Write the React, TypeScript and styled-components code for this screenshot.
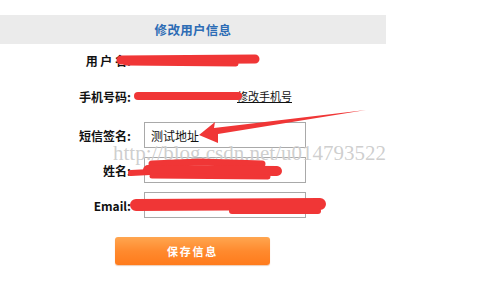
import React from 'react'
import styled, { createGlobalStyle } from 'styled-components'

const GlobalStyle = createGlobalStyle`
  html, body {
    margin: 0;
    padding: 0;
    background: #ffffff;
  }
  body {
    font-family: 'Noto Sans CJK SC', 'Liberation Sans', sans-serif;
  }
`

const Page = styled.div`
  position: relative;
  width: 480px;
  height: 300px;
  overflow: hidden;
  background: #ffffff;
`

const Header = styled.div`
  margin-top: 15px;
  width: 386px;
  height: 29px;
  background: #ebebeb;
  display: flex;
  align-items: center;
  justify-content: center;
  font-size: 12.5px;
  font-weight: 700;
  color: #2d6cb5;
  letter-spacing: 0.3px;
`

const Row = styled.div<{ top: number; h: number }>`
  display: grid;
  grid-template-columns: 131px 1fr;
  align-items: center;
  margin-top: ${({ top }) => top}px;
  height: ${({ h }) => h}px;
`

const Label = styled.div`
  text-align: right;
  font-size: 12px;
  font-weight: 700;
  color: #111111;
  white-space: pre;
`

const Cell = styled.div<{ pad?: number }>`
  display: flex;
  align-items: center;
  padding-left: ${({ pad }) => pad ?? 13}px;
`

const Value = styled.span<{ w: number }>`
  display: inline-block;
  width: ${({ w }) => w}px;
`

const Link = styled.a`
  font-size: 11px;
  color: #111111;
  text-decoration: underline;
  cursor: pointer;
`

const Input = styled.input`
  box-sizing: border-box;
  width: 162px;
  height: 26px;
  margin: 0;
  padding: 0 6px;
  border: 1px solid #a9a9a9;
  outline: none;
  font-family: 'Noto Sans CJK SC', 'Liberation Sans', sans-serif;
  font-size: 12px;
  color: #111111;
  background: #ffffff;
`

const SaveButton = styled.button`
  margin: 19px 0 0 115px;
  width: 155px;
  height: 28px;
  border: none;
  border-radius: 3px;
  background: linear-gradient(to bottom, #ffa650 0%, #ff8a2e 50%, #ff7b1c 100%);
  box-shadow: 0 1px 1px rgba(200, 110, 40, 0.35);
  color: #ffffff;
  font-family: 'Noto Sans CJK SC', 'Liberation Sans', sans-serif;
  font-size: 11px;
  font-weight: 700;
  letter-spacing: 1.8px;
  display: flex;
  align-items: center;
  justify-content: center;
  cursor: pointer;
`

const Watermark = styled.div`
  position: absolute;
  left: 113px;
  top: 141px;
  font-family: 'Liberation Serif', serif;
  font-size: 21px;
  line-height: 24px;
  color: rgba(165, 165, 165, 0.55);
  text-shadow: 0 0 1px #ffffff;
  white-space: nowrap;
  pointer-events: none;
`

const Marks = styled.svg`
  position: absolute;
  left: 0;
  top: 0;
  pointer-events: none;
`

// red redaction strokes + arrow drawn on top of the screenshot
function Annotations() {
  const red = '#f03636'
  return (
    <Marks width={480} height={300} viewBox="0 0 480 300">
      <g stroke={red} strokeLinecap="round" fill="none">
        <path d="M121 60 L255 59" strokeWidth={9} />
        <path d="M126 63 L236 64" strokeWidth={5} />
        <path d="M138 96 L238 96" strokeWidth={8} />
        <path d="M131 173 L150 172" strokeWidth={6} />
        <path d="M152 164 L200 162 L262 164" strokeWidth={7} />
        <path d="M148 170 L277 171" strokeWidth={10} />
        <path d="M152 176 L268 177" strokeWidth={5} />
        <path d="M136 205 L320 204" strokeWidth={12} />
        <path d="M232 211 L318 211" strokeWidth={6} />
      </g>
      <polygon points="199,135 215,122 214,128 366,110 218,134 218,143" fill={red} />
    </Marks>
  )
}

export default function App() {
  return (
    <Page>
      <GlobalStyle />
      <Header>修改用户信息</Header>
      <Row top={4} h={24}>
        <Label>{'用 户 名:'}</Label>
        <Cell pad={4} />
      </Row>
      <Row top={12} h={24}>
        <Label>手机号码:</Label>
        <Cell pad={4}>
          <Value w={102} />
          <Link>修改手机号</Link>
        </Cell>
      </Row>
      <Row top={14} h={26}>
        <Label>短信签名:</Label>
        <Cell>
          <Input defaultValue="测试地址" />
        </Cell>
      </Row>
      <Row top={9} h={26}>
        <Label>姓名:</Label>
        <Cell>
          <Input />
        </Cell>
      </Row>
      <Row top={9} h={26}>
        <Label>Email:</Label>
        <Cell>
          <Input />
        </Cell>
      </Row>
      <SaveButton>保存信息</SaveButton>
      <Watermark>http://blog.csdn.net/u014793522</Watermark>
      <Annotations />
    </Page>
  )
}
